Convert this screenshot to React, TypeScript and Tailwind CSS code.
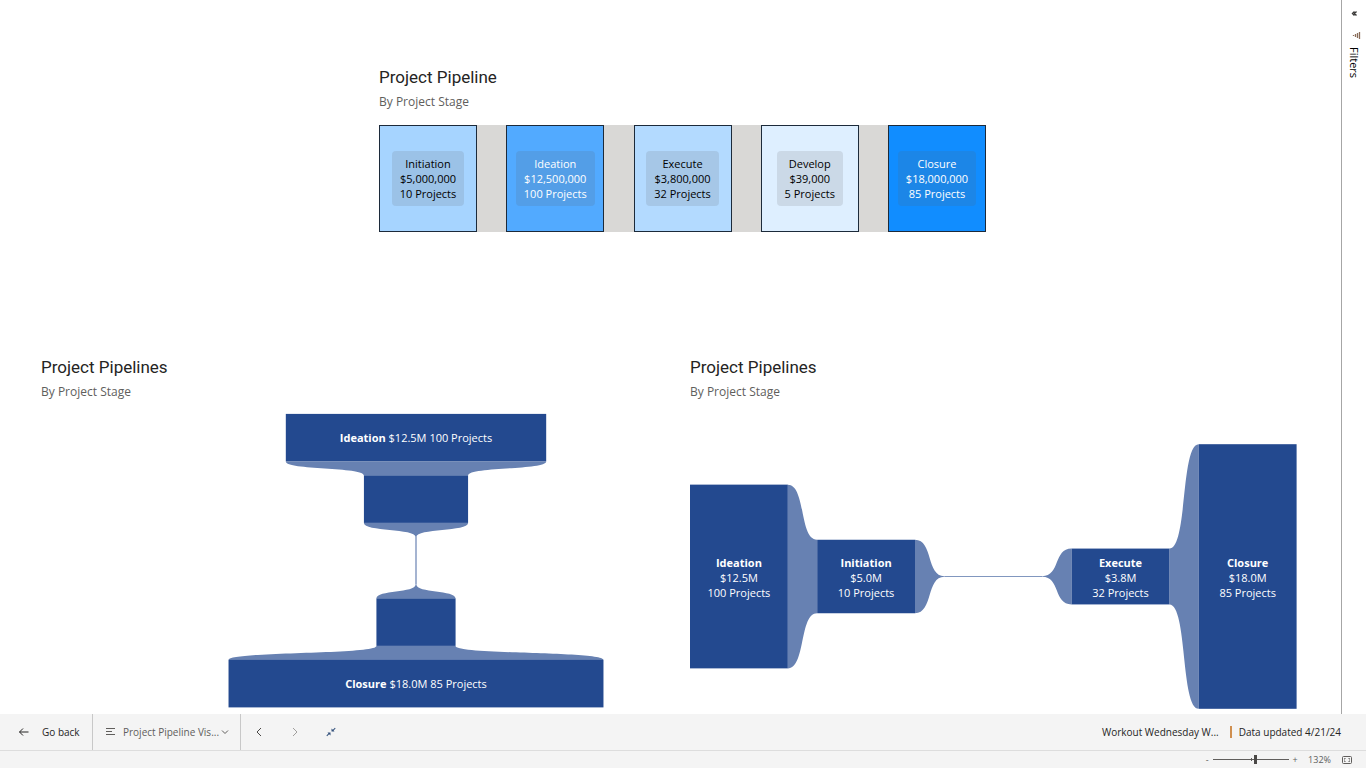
import React from "react";

type Stage = { name: string; value: number; short: string; projects: string };

const stages: Stage[] = [
  { name: "Ideation", value: 12.5, short: "$12.5M", projects: "100 Projects" },
  { name: "Initiation", value: 5, short: "$5.0M", projects: "10 Projects" },
  { name: "Develop", value: 0.039, short: "$0.0M", projects: "5 Projects" },
  { name: "Execute", value: 3.8, short: "$3.8M", projects: "32 Projects" },
  { name: "Closure", value: 18, short: "$18.0M", projects: "85 Projects" },
];

const boxes = [
  { name: "Initiation", amount: "$5,000,000", projects: "10 Projects", tone: "bg-[#a6d4ff] text-black" },
  { name: "Ideation", amount: "$12,500,000", projects: "100 Projects", tone: "bg-[#52aaff] text-white" },
  { name: "Execute", amount: "$3,800,000", projects: "32 Projects", tone: "bg-[#b3daff] text-black" },
  { name: "Develop", amount: "$39,000", projects: "5 Projects", tone: "bg-[#deefff] text-black" },
  { name: "Closure", amount: "$18,000,000", projects: "85 Projects", tone: "bg-[#118dff] text-white" },
];

const BAR = "#23498f";
const LINK = "#6781b2";
// How far each control point of a link reaches towards the other bar.
const BEND = 0.62;

function Heading({ title }: { title: string }) {
  return (
    <header>
      <h2 className="font-[Roboto,sans-serif] text-[17px] leading-6 text-[#252423]">{title}</h2>
      <p className="mt-[3px] text-[12px] leading-5 text-[#605e5c]">By Project Stage</p>
    </header>
  );
}

function VerticalFunnel() {
  const cx = 375;
  const top = 8.9;
  const step = 61.5;
  const size = 47.5;
  const half = (v: number) => (v * 20.83) / 2;
  return (
    <svg viewBox="0 0 607 305" className="h-auto w-full" role="img" aria-label="Pipeline by stage, vertical">
      {stages.slice(0, -1).map((s, i) => {
        const a = half(s.value);
        const b = half(stages[i + 1].value);
        const y0 = top + i * step + size;
        const y1 = top + (i + 1) * step;
        const m0 = y0 + (y1 - y0) * BEND;
        const m1 = y1 - (y1 - y0) * BEND;
        return (
          <path
            key={s.name}
            fill={LINK}
            d={`M${cx - a} ${y0}C${cx - a} ${m0} ${cx - b} ${m1} ${cx - b} ${y1}H${cx + b}C${cx + b} ${m1} ${cx + a} ${m0} ${cx + a} ${y0}Z`}
          />
        );
      })}
      {stages.map((s, i) => (
        <g key={s.name}>
          <rect x={cx - half(s.value)} y={top + i * step} width={half(s.value) * 2} height={size} fill={BAR} />
          {s.value > 10 && (
            <text x={cx} y={37 + i * step} textAnchor="middle" fontSize="11" fill="#fff">
              <tspan fontWeight="700">{s.name}</tspan> {s.short} {s.projects}
            </text>
          )}
        </g>
      ))}
    </svg>
  );
}

function HorizontalFunnel() {
  const cy = 171.5;
  const step = 127.2;
  const size = 97.8;
  const half = (v: number) => (v * 14.7) / 2;
  return (
    <svg viewBox="0 0 607 305" className="h-auto w-full" role="img" aria-label="Pipeline by stage, horizontal">
      {stages.slice(0, -1).map((s, i) => {
        const a = half(s.value);
        const b = half(stages[i + 1].value);
        const x0 = i * step + size;
        const x1 = (i + 1) * step;
        const m0 = x0 + (x1 - x0) * BEND;
        const m1 = x1 - (x1 - x0) * BEND;
        return (
          <path
            key={s.name}
            fill={LINK}
            d={`M${x0} ${cy - a}C${m0} ${cy - a} ${m1} ${cy - b} ${x1} ${cy - b}V${cy + b}C${m1} ${cy + b} ${m0} ${cy + a} ${x0} ${cy + a}Z`}
          />
        );
      })}
      {stages.map((s, i) => {
        const x = i * step + size / 2;
        return (
          <g key={s.name} textAnchor="middle" fontSize="11">
            <rect x={i * step} y={cy - half(s.value)} width={size} height={half(s.value) * 2} fill={BAR} />
            {s.value > 1 && (
              <g fill="#fff">
                <text x={x} y={162} fontWeight="700">{s.name}</text>
                <text x={x} y={177}>{s.short}</text>
                <text x={x} y={192}>{s.projects}</text>
              </g>
            )}
          </g>
        );
      })}
    </svg>
  );
}

const line = { fill: "none", stroke: "currentColor", strokeWidth: 1 } as const;

export default function App() {
  return (
    <div className="flex min-h-screen flex-col bg-white font-['Open_Sans','Noto_Sans',sans-serif]">
      <div className="flex flex-1">
        <main className="flex-1 pt-[65px] pr-11 pl-[41px]">
          <section className="ml-[338px] max-w-[607px]">
            <Heading title="Project Pipeline" />
            <div className="mt-[13px] flex h-[107px] justify-between bg-[#d9d8d6]">
              {boxes.map((b) => (
                <div
                  key={b.name}
                  className={`flex w-[98px] items-center justify-center border border-[#1c2a3a] ${b.tone}`}
                >
                  <p className="rounded bg-[#605e5c]/15 px-2 py-[5px] text-center text-[11px] leading-[15px] whitespace-nowrap">
                    {b.name}
                    <br />
                    {b.amount}
                    <br />
                    {b.projects}
                  </p>
                </div>
              ))}
            </div>
          </section>
          <div className="mt-[123px] grid grid-cols-2 gap-[42px]">
            <section>
              <Heading title="Project Pipelines" />
              <div className="mt-[3px]"><VerticalFunnel /></div>
            </section>
            <section>
              <Heading title="Project Pipelines" />
              <div className="mt-[3px]"><HorizontalFunnel /></div>
            </section>
          </div>
        </main>
        <aside className="flex w-[25px] flex-col items-center border-l border-[#a6a6a6] pt-[9px]">
          <button type="button" aria-label="Expand filters" className="text-[#3b3a39]">
            <svg width="10" height="10" viewBox="0 0 10 10" {...line} className="block">
              <path d="M5.500 2.500 3.500 4.500l2 2M7.500 2.500l-2 2 2 2" strokeWidth="1.400" />
            </svg>
          </button>
          <button type="button" className="mt-3 flex flex-col items-center gap-[6px] text-black">
            <svg width="10" height="10" viewBox="0 0 10 10" {...line} className="ml-1 block text-[#8a6d5a]">
              <path d="M8.500 1v7M6.500 2v5M4.500 3v3M2.500 4v1" strokeWidth="1.300" />
            </svg>
            <span className="text-[11px] leading-4 font-medium [writing-mode:vertical-rl]">Filters</span>
          </button>
        </aside>
      </div>
      <footer className="bg-[#f4f4f4] text-[10px] text-[#252423]">
        <div className="flex h-[37px] items-stretch border-b border-[#dddddd]">
          <button type="button" className="flex w-[93px] items-center gap-3 border-r border-[#c8c8c8] pl-[18px]">
            <svg width="12" height="12" viewBox="0 0 12 12" {...line}>
              <path d="M10.500 6h-9M5 2.500 1.500 6 5 9.500" />
            </svg>
            Go back
          </button>
          <button type="button" className="flex w-[148px] items-center border-r border-[#c8c8c8] pl-3 text-[#605e5c]">
            <svg width="12" height="12" viewBox="0 0 12 12" {...line}>
              <path d="M1 2.500h9M1 5.500h6M1 8.500h9" />
            </svg>
            <span className="ml-[6px] whitespace-nowrap">Project Pipeline Vis...</span>
            <svg width="8" height="8" viewBox="0 0 8 8" {...line} className="ml-[2px]">
              <path d="M1 2.500 4 5.500l3-3" />
            </svg>
          </button>
          <nav className="flex items-center gap-6 pl-3">
            <button type="button" aria-label="Previous page" className="text-[#4a4846]">
              <svg width="12" height="12" viewBox="0 0 12 12" {...line} className="block"><path d="M8 2 4 6l4 4" /></svg>
            </button>
            <button type="button" aria-label="Next page" className="text-[#a19f9d]">
              <svg width="12" height="12" viewBox="0 0 12 12" {...line} className="block"><path d="m4 2 4 4-4 4" /></svg>
            </button>
            <button type="button" aria-label="Exit full screen" className="text-[#33517c]">
              <svg width="12" height="12" viewBox="0 0 12 12" fill="currentColor" className="block">
                <path d="M6.500 2.500v3h3L8.600 4.400l2-2-.7-.7-2 2ZM5.500 9.500v-3h-3L3.400 7.600l-2 2 .7.700 2-2Z" />
              </svg>
            </button>
          </nav>
          <div className="ml-auto flex items-center pr-[25px]">
            <span>Workout Wednesday W...</span>
            <span className="mr-[7px] ml-[11px] h-3 w-[2px] bg-[#cf8f50]" />
            <span>Data updated 4/21/24</span>
          </div>
        </div>
        <div className="flex h-[17px] items-center justify-end pr-[13px] text-[9px] leading-3 text-[#605e5c]">
          <button type="button" aria-label="Zoom out" className="w-3">-</button>
          <input
            type="range"
            aria-label="Zoom"
            min="0"
            max="100"
            defaultValue="56"
            className="h-[9px] w-[76px] appearance-none bg-[linear-gradient(#605e5c,#605e5c),linear-gradient(#605e5c,#605e5c)] bg-[length:100%_1px,1px_3px] bg-center bg-no-repeat [&::-webkit-slider-thumb]:h-[9px] [&::-webkit-slider-thumb]:w-[3px] [&::-webkit-slider-thumb]:appearance-none [&::-webkit-slider-thumb]:bg-[#4a4846]"
          />
          <button type="button" aria-label="Zoom in" className="w-3">+</button>
          <span className="ml-[7px]">132%</span>
          <button type="button" aria-label="Fit to page" className="ml-[10px]">
            <svg width="12" height="10" viewBox="0 0 12 10" {...line} className="block">
              <rect x="1.500" y="1.500" width="9" height="7" rx="1" />
              <path d="M3.500 4.500v-1h1M8.500 4.500v-1h-1M3.500 5.500v1h1M8.500 5.500v1h-1" />
            </svg>
          </button>
        </div>
      </footer>
    </div>
  );
}
